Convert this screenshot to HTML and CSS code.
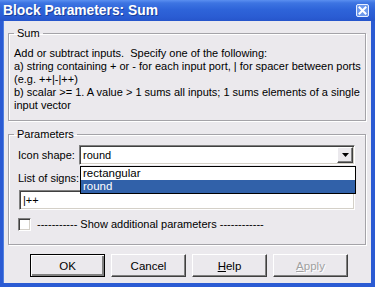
FILE: index.html
```html
<!DOCTYPE html>
<html>
<head>
<meta charset="utf-8">
<link rel="stylesheet" href="styles.css">
</head>
<body>
<div class="window">
  <div class="titlebar">
    <span class="title">Block Parameters: Sum</span>
    <span class="close">
      <svg width="13" height="13" viewBox="0 0 13 13">
        <rect x="0.5" y="0.5" width="12" height="12" rx="1.5" fill="#6d98ec" stroke="#e8efff"/>
        <path d="M3.5 3.5 L9.5 9.5 M9.5 3.5 L3.5 9.5" stroke="#ffffff" stroke-width="2" stroke-linecap="square"/>
      </svg>
    </span>
  </div>
  <div class="client">
    <fieldset class="group sum">
      <legend>Sum</legend>
      <p class="desc">Add or subtract inputs.&nbsp; Specify one of the following:<br>a) string containing + or - for each input port, | for spacer between ports<br>(e.g. ++|-|++)<br>b) scalar &gt;= 1. A value &gt; 1 sums all inputs; 1 sums elements of a single<br>input vector</p>
    </fieldset>
    <fieldset class="group params">
      <legend>Parameters</legend>
      <div class="row">
        <span class="label shape-label">Icon shape:</span>
        <div class="combo">
          <span class="combo-text">round</span>
          <span class="combo-btn">
            <svg width="7" height="4" viewBox="0 0 7 4"><path d="M0 0 H7 L3.5 4 Z" fill="#000"/></svg>
          </span>
          <ul class="dropdown">
            <li>rectangular</li>
            <li class="selected">round</li>
          </ul>
        </div>
      </div>
      <div class="label signs-label">List of signs:</div>
      <div class="edit">|++</div>
      <div class="check-row">
        <span class="checkbox"></span>
        <span class="check-text">----------- Show additional parameters ------------</span>
      </div>
    </fieldset>
    <div class="buttons">
      <button class="btn default">OK</button>
      <button class="btn">Cancel</button>
      <button class="btn"><u>H</u>elp</button>
      <button class="btn disabled"><u>A</u>pply</button>
    </div>
  </div>
</div>
</body>
</html>
```

FILE: styles.css
```css
* { box-sizing: border-box; }
html, body {
  margin: 0;
  padding: 0;
  width: 375px;
  height: 287px;
  overflow: hidden;
  font-family: "Liberation Sans", Arial, sans-serif;
  font-size: 11px;
}
.window {
  width: 375px;
  height: 287px;
  display: flex;
  flex-direction: column;
  background: #2b5bd3;
}
.titlebar {
  height: 21px;
  flex: 0 0 21px;
  display: flex;
  align-items: center;
  justify-content: space-between;
  padding: 0 6px 0 3px;
  background: linear-gradient(#5a8ff0 0, #3d74e2 3px, #2e64d9 45%, #2a5cd3 80%, #2655cb 100%);
}
.title {
  color: #fff;
  font-weight: bold;
  font-size: 13.8px;
  line-height: 21px;
  text-shadow: 1px 1px 0 #1a3f9a;
}
.close { display: flex; }
.client {
  flex: 1;
  margin: 0 4px 4px 3px;
  background: #ebe9ed;
  border-left: 1px solid #4f7fe0;
  display: flex;
  flex-direction: column;
}
.group {
  margin: 0 5px 0 4px;
  border: 1px solid #a4a3a8;
  box-shadow: 1px 1px 0 #fff, inset 1px 1px 0 #fff;
  min-inline-size: 0;
}
.group legend {
  line-height: 13px;
  padding: 0 3px;
  color: #000;
}
.sum {
  margin-top: 6px;
  padding: 7px 10px 8px 5px;
}
.desc {
  margin: 0;
  line-height: 13px;
  white-space: nowrap;
}
.params {
  margin-top: 7px;
  padding: 4px 10px 13px 9px;
}
.params legend { margin-left: -4px; }
.row {
  display: flex;
  align-items: center;
  height: 20px;
}
.label { line-height: 13px; white-space: nowrap; }
.shape-label { flex: 0 0 61px; }
.combo {
  position: relative;
  flex: 1;
  height: 20px;
  background: #fff;
  border-top: 1px solid #808080;
  border-left: 1px solid #808080;
  border-right: 1px solid #fff;
  border-bottom: 1px solid #fff;
  box-shadow: inset 1px 1px 0 #404040, inset -1px -1px 0 #d4d0c8;
  display: flex;
  align-items: center;
}
.combo-text { padding-left: 3px; flex: 1; }
.combo-btn {
  width: 16px;
  height: 16px;
  margin-right: 1px;
  background: #ebe9ed;
  border-top: 1px solid #fff;
  border-left: 1px solid #fff;
  border-right: 1px solid #404040;
  border-bottom: 1px solid #404040;
  box-shadow: inset -1px -1px 0 #808080;
  display: flex;
  align-items: center;
  justify-content: center;
}
.dropdown {
  position: absolute;
  left: 0;
  top: 20px;
  width: calc(100% + 2px);
  margin: 0;
  padding: 0;
  list-style: none;
  background: #fff;
  border: 1px solid #000;
  z-index: 2;
  font-size: 11.5px;
}
.dropdown li {
  height: 13px;
  line-height: 13px;
  padding-left: 2px;
}
.dropdown li.selected {
  background: #3161a9;
  color: #fff;
}
.signs-label { margin-top: 7px; }
.edit {
  margin: 5px 0 0 1px;
  height: 20px;
  line-height: 18px;
  padding-left: 3px;
  background: #fff;
  border-top: 1px solid #808080;
  border-left: 1px solid #808080;
  border-right: 1px solid #fff;
  border-bottom: 1px solid #fff;
  box-shadow: inset 1px 1px 0 #404040, inset -1px -1px 0 #d4d0c8;
}
.check-row {
  margin-top: 8px;
  height: 13px;
  display: flex;
  align-items: center;
  gap: 6px;
}
.checkbox {
  width: 13px;
  height: 13px;
  background: #fff;
  border-top: 1px solid #808080;
  border-left: 1px solid #808080;
  border-right: 1px solid #fff;
  border-bottom: 1px solid #fff;
  box-shadow: inset 1px 1px 0 #404040, inset -1px -1px 0 #d4d0c8;
}
.check-text { line-height: 13px; white-space: nowrap; }
.buttons {
  margin-top: 9px;
  display: flex;
  justify-content: flex-end;
  gap: 6px;
  padding-right: 23px;
}
.btn {
  width: 75px;
  height: 23px;
  padding: 0;
  font: inherit;
  font-size: 11.5px;
  color: #000;
  background: #ebe9ed;
  border-top: 1px solid #fff;
  border-left: 1px solid #fff;
  border-right: 1px solid #404040;
  border-bottom: 1px solid #404040;
  box-shadow: inset -1px -1px 0 #808080;
}
.btn.default {
  border: 1px solid #000;
  box-shadow: inset 1px 1px 0 #fff, inset -2px -2px 0 #808080, inset -1px -1px 0 #404040;
}
.btn.disabled {
  color: #a0a0a0;
  text-shadow: 1px 1px 0 #fff;
}
```
